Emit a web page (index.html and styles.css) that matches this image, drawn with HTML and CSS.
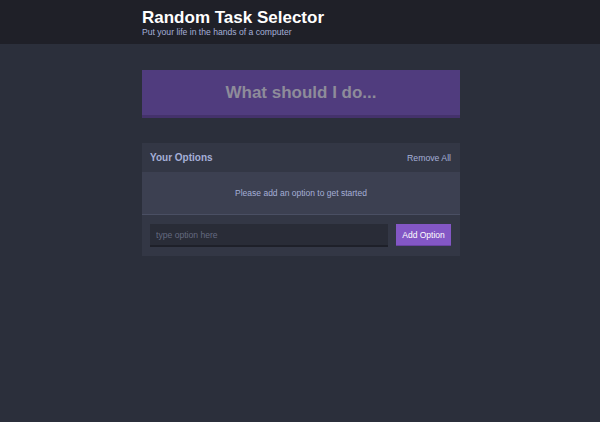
FILE: index.html
```html
<!DOCTYPE html>
<html>
<head>
<meta charset="utf-8">
<link rel="stylesheet" href="styles.css">
</head>
<body>
<header class="header">
  <div class="container">
    <h1 class="header-title">Random Task Selector</h1>
    <h2 class="header-subtitle">Put your life in the hands of a computer</h2>
  </div>
</header>
<main class="container">
  <button class="big-button" disabled>What should I do...</button>
  <section class="widget">
    <div class="widget-header">
      <h3 class="widget-title">Your Options</h3>
      <button class="button-link">Remove All</button>
    </div>
    <p class="widget-message">Please add an option to get started</p>
    <form class="add-option">
      <input class="add-option-input" type="text" placeholder="type option here">
      <button class="button" type="button">Add Option</button>
    </form>
  </section>
</main>
</body>
</html>
```
FILE: styles.css
```css
* { box-sizing: border-box; }
html, body { margin: 0; padding: 0; }
body {
  background: #2b2f3b;
  font-family: "Liberation Sans", Arial, Helvetica, sans-serif;
  color: #fff;
  height: 422px;
}
.container {
  width: 318px;
  margin-left: calc(50% - 158px);
}
.header {
  background: #1f2028;
  height: 44px;
  padding-top: 9px;
}
.header-title {
  margin: 0;
  font-size: 17px;
  line-height: 18px;
  font-weight: bold;
  color: #fff;
}
.header-subtitle {
  margin: 0;
  font-size: 8.6px;
  line-height: 10px;
  font-weight: normal;
  color: #a5afd7;
}
.big-button {
  display: block;
  width: 100%;
  margin: 26px 0 25px;
  height: 48px;
  background: #503c7e;
  border: none;
  border-bottom: 3px solid #44326b;
  color: #8e8c9a;
  font-family: inherit;
  font-size: 17px;
  font-weight: bold;
  padding: 0;
}
.widget {
  background: #3c4051;
}
.widget-header {
  background: #333745;
  display: flex;
  justify-content: space-between;
  align-items: center;
  height: 29px;
  padding: 0 9px 0 8px;
}
.widget-title {
  margin: 0;
  font-size: 10px;
  font-weight: bold;
  color: #a5afd7;
}
.button-link {
  background: none;
  border: none;
  padding: 0;
  font-family: inherit;
  font-size: 8.7px;
  color: #a5afd7;
}
.widget-message {
  margin: 0;
  height: 43px;
  line-height: 42px;
  text-align: center;
  font-size: 8.5px;
  color: #a5afd7;
  border-bottom: 1px solid #4a4f63;
}
.add-option {
  background: #333745;
  display: flex;
  align-items: flex-start;
  gap: 8px;
  padding: 9px 9px 9px 8px;
  height: 41px;
}
.add-option-input {
  flex: 1;
  height: 23px;
  background: #292c37;
  border: none;
  border-bottom: 2px solid #1e2029;
  color: #a5afd7;
  font-family: inherit;
  font-size: 8.6px;
  padding: 0 6px;
  outline: none;
}
.add-option-input::placeholder { color: #646a80; }
.button {
  height: 22px;
  width: 55px;
  background: #8357c5;
  border: none;
  border-bottom: 1px solid #6a44a3;
  color: #fff;
  font-family: inherit;
  font-size: 8.5px;
  padding: 0;
}
```
